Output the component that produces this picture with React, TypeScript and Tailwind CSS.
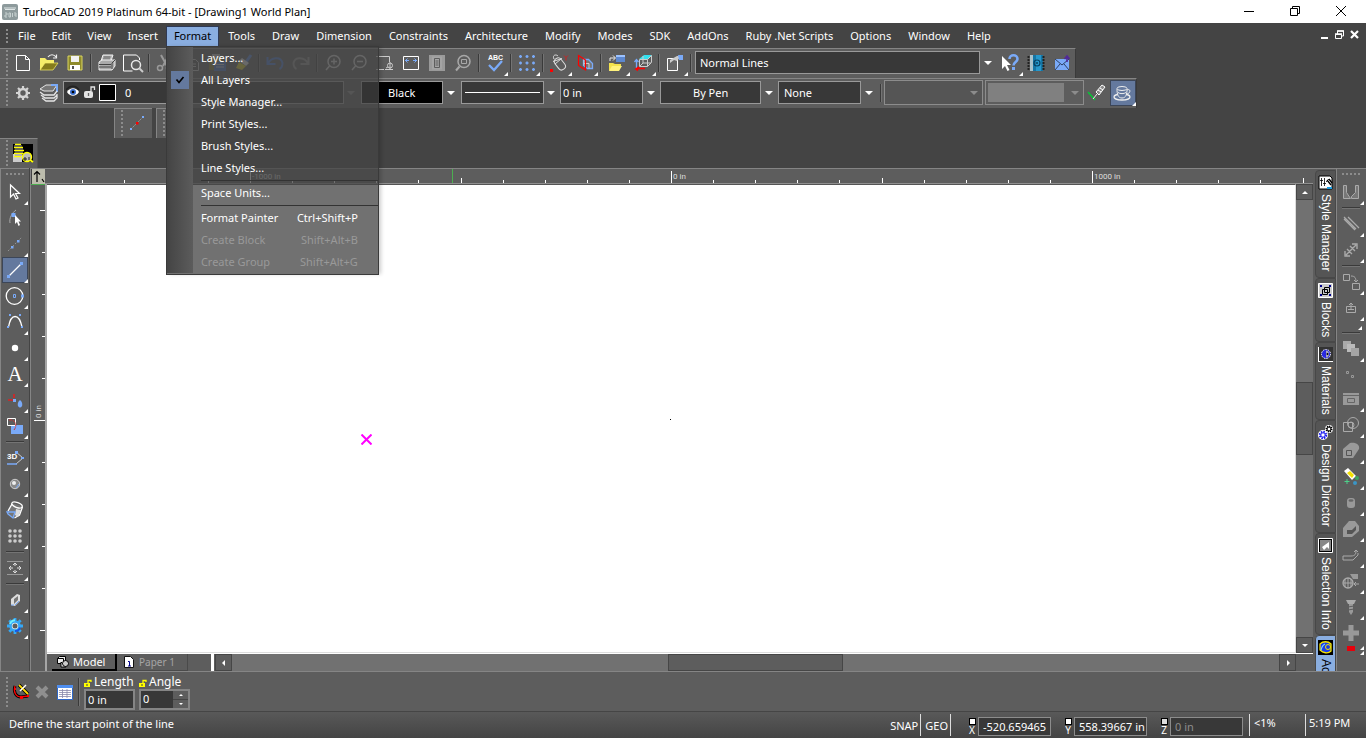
import React from "react";

type Kids = { children?: React.ReactNode };

const B = "#7aaaf8";

function Ico({ children }: Kids) {
  return (
    <svg width="26" height="26" viewBox="0 0 26 26" fill="none" aria-hidden="true" className="block shrink-0">
      {children}
    </svg>
  );
}

const svgOf = (node: React.ReactNode) => <Ico>{node}</Ico>;

/* ---------- drawings for the standard toolbar ---------- */

const icons = {
  fresh: svgOf(<path d="M6.500 5.500h9l4 4v11h-13zM15.500 5.500v4h4" stroke="#fff" />),
  open: svgOf(
    <>
      <path d="M4 20V8h5l2 2h7v3" fill="#f6ee6a" />
      <path d="M4 20l5-7h13l-5 7z" fill="#857c1c" stroke="#f6ee6a" strokeWidth=".7" />
      <path d="M12 7c2-3 6-3 8 0M20.500 4.500V8H17" stroke="#eee" strokeWidth="1.200" />
    </>,
  ),
  save: svgOf(
    <>
      <path d="M6 6h14v14H6z" fill="#8f8b2c" stroke="#d9d560" />
      <path d="M9 6h8v6H9z" fill="#f2f2f2" />
      <path d="M8 15h10v5H8z" fill="#fff" />
      <path d="M10 16h2v3h-2z" fill="#555" />
    </>,
  ),
  print: svgOf(
    <>
      <path d="M9 5h10l-2 6H7z" fill="#bbb" stroke="#eee" />
      <path d="M9.500 7h7M9 9h7" stroke="#555" />
      <path d="M5 12l3-2h13v6l-3 4H5z" fill="#aaa" stroke="#eee" />
      <path d="M5 14.500h12M5 17h12M18 19v-6l3-3" stroke="#444" />
    </>,
  ),
  preview: svgOf(
    <>
      <path d="M19.500 10V8l-3-3h-13v16h9" stroke="#fff" />
      <circle cx="16" cy="15" r="4.500" stroke="#e8e8e8" strokeWidth="1.500" />
      <path d="M19 18l4 4" stroke="#ccc" strokeWidth="2" />
    </>,
  ),
  cut: svgOf(
    <>
      <path d="M9 5l6 11M17 5l-6 11" stroke="#999" strokeWidth="2" />
      <circle cx="8" cy="18" r="2.500" stroke="#999" strokeWidth="1.500" />
      <circle cx="17" cy="18" r="2.500" stroke="#999" strokeWidth="1.500" />
    </>,
  ),
  copy: svgOf(
    <>
      <path d="M5.500 5.500h8v10h-8zM11.500 9.500h6l3 3v8h-9z" stroke="#bbb" fill="#555" />
      <path d="M13 14h5M13 16.500h5" stroke="#bbb" />
    </>,
  ),
  paste: svgOf(
    <>
      <path d="M5 6h14v14H5z" fill="#8a7d38" />
      <path d="M8 4h8v4H8z" fill="#bbb" />
      <path d="M10 12h12v9H10z" fill="#4b76c0" />
      <path d="M12 14.500h8M12 17h8" stroke="#ccc" />
    </>,
  ),
  brush: svgOf(
    <>
      <path d="M21 5l-5 7" stroke="#5a86d8" strokeWidth="3" />
      <path d="M12 8l7 5-3 3-7-5z" fill="#ddd" />
      <path d="M9 12l7 4-4 4-6-2z" fill="#d8cc2e" />
    </>,
  ),
  undo: svgOf(<path d="M5.500 7v7h8M6 13.500C9 7 19 6 20.500 13c0 3-1 5-3 6" stroke="#4e7bd0" strokeWidth="2" />),
  redo: svgOf(<path d="M20.500 7v7h-8M20 13.500C17 7 7 6 5.500 13c0 3 1 5 3 6" stroke="#8d8d8d" strokeWidth="2" />),
  zin: svgOf(
    <>
      <circle cx="14" cy="11.500" r="6" stroke="#ccc" strokeWidth="1.500" />
      <path d="M9.500 16L6 20M11 11.500h6M14 8.500v6" stroke="#ccc" strokeWidth="1.500" />
    </>,
  ),
  zout: svgOf(
    <>
      <circle cx="14" cy="11.500" r="6" stroke="#ccc" strokeWidth="1.500" />
      <path d="M9.500 16L6 20M11 11.500h6" stroke="#ccc" strokeWidth="1.500" />
    </>,
  ),
  zwin: svgOf(
    <>
      <path d="M4 6.500h13.500V12M4 19.500h8" stroke="#ccc" />
      <circle cx="18" cy="15.500" r="2.500" stroke="#ccc" />
      <path d="M18 12v8M14 18l2-1M13 19.500h8" stroke="#ccc" />
    </>,
  ),
  extents: svgOf(
    <>
      <path d="M5.500 6.500h15v13h-15z" stroke="#fff" />
      <path d="M7 10.500h4M9.500 8.500l-2 2 2 2M19 10.500h-4M16.500 8.500l2 2-2 2" stroke={B} />
    </>,
  ),
  full: svgOf(
    <>
      <path d="M5 5h16v16H5z" fill="#9a9a9a" />
      <path d="M8 6.500h10v13H8z" fill="#a4a4a4" />
      <path d="M10.500 8.500h5v9h-5zM11.500 11h3M11.500 13h3M11.500 15h3" stroke="#5d5d5d" />
    </>,
  ),
  zsel: svgOf(
    <>
      <circle cx="14" cy="11.500" r="6" stroke="#a8a8a8" strokeWidth="1.500" />
      <path d="M9.500 16.500L6 20.500" stroke="#a8a8a8" strokeWidth="2" />
      <path d="M11.500 9.500h5v4h-5z" stroke="#a8a8a8" />
    </>,
  ),
  grid: svgOf(
    <path
      d="M5 6.500h3M11.500 6.500h3M18 6.500h3M5 13h3M11.500 13h3M18 13h3M5 19.500h3M11.500 19.500h3M18 19.500h3M6.500 5v3M13 5v3M19.500 5v3M6.500 11.500v3M13 11.500v3M19.500 11.500v3M6.500 18v3M13 18v3M19.500 18v3"
      stroke={B}
      strokeWidth="1.500"
    />,
  ),
  mouse: svgOf(
    <>
      <rect x="10" y="8" width="7.500" height="13" rx="3.500" transform="rotate(-38 13 14)" stroke="#ddd" />
      <path d="M7 11.500l9-3M8 9c-2-4 2-5 4-3M9 14l6-5" stroke="#ddd" />
      <path d="M18 5.500l2 2 2-2M20 7.500v3" stroke="#c22" />
      <path d="M4 19h3v3H4z" fill="#f00" />
    </>,
  ),
  solid: svgOf(
    <>
      <path d="M11.500 9.500h5l4 4v5h-5l-4-3z" fill="#777" stroke={B} strokeWidth="1.300" />
      <path d="M12 13.500h5v5M12 9.500v6" stroke="#ccc" />
      <path d="M6.500 5.500l7 4.500v10l-7-4.500z" stroke="#f00" strokeWidth="1.200" />
    </>,
  ),
  folderLink: svgOf(
    <>
      <path d="M12 5h9v7h-9z" fill="#5d88cf" />
      <path d="M12 5h9v2h-9z" fill="#9cc2ff" />
      <path d="M6 11V8h5M9 5.500L11.500 8 9 10.500" stroke="#eee" />
      <path d="M5 21V13h4l2 1h6v2" fill="#f3e24d" />
      <path d="M5 21l3-5h10l-3 5z" fill="#fff27d" />
    </>,
  ),
  cube: svgOf(
    <>
      <path d="M9 9l5-4h8l-4 4z" fill="#33e0ee" />
      <path d="M9.500 9.500h8v7h-8zM17.500 9.500l4-4v7l-4 4M13 6v7h8M10 16l3-3" stroke="#ccc" />
      <path d="M6.500 18v-8M4.500 12l2-2.500 2 2.500" stroke={B} strokeWidth="1.300" />
      <path d="M6 18.500h9M9 17l-3 2 2 1.500" stroke="#f00" strokeWidth="1.600" />
    </>,
  ),
  wrench: svgOf(
    <>
      <path d="M5.500 8.500h10v12h-10z" fill="#666" stroke="#fff" />
      <path d="M8 10l7-4h4l-4 5-3-1-4 3z" fill="#ccc" />
      <path d="M16 5h5v5h-4" fill={B} />
    </>,
  ),
  help: svgOf(
    <>
      <path d="M5 6v13l3-3 2.500 5 2-1-2.500-5h4z" fill="#fff" />
      <path d="M12.500 9c0-5 8-5 8 0 0 3-4 3-4 6.500" stroke={B} strokeWidth="2.600" />
      <path d="M15 17h3v3h-3z" fill={B} />
    </>,
  ),
  book: svgOf(
    <>
      <path d="M7 5h13v16H7z" fill="#1576a6" />
      <path d="M13 5h5v16h-5z" fill="#2798cc" />
      <path d="M7 5h3v16H7z" fill="#a9c2cc" />
      <path d="M5.500 6v15M20.500 6v15" stroke="#222" strokeWidth="2" strokeDasharray="2 1" />
      <circle cx="14" cy="13" r="3" stroke="#074061" strokeWidth="1.200" />
      <circle cx="14" cy="13" r="1" fill="#074061" />
    </>,
  ),
  mail: svgOf(
    <>
      <path d="M6 9h14v11H6z" fill={B} />
      <path d="M6 9l7 6 7-6M6 20l5-6M20 20l-5-6" stroke="#2c3f63" />
      <path d="M18 12V7M15.500 9L18 6 20.500 9" stroke="#51289a" strokeWidth="1.600" />
    </>,
  ),
  gear: svgOf(
    <>
      <circle cx="13" cy="13" r="4" stroke="#d4d4d4" strokeWidth="2.600" />
      <path d="M13 6v3M13 17v3M6 13h3M17 13h3M8 8l2 2M16 16l2 2M8 18l2-2M16 10l2-2" stroke="#d4d4d4" strokeWidth="2.200" />
    </>,
  ),
  layers: svgOf(
    <>
      <path d="M4 9l6-4h11l-4 6H8z" fill="#777" stroke="#e5e5e5" />
      <path d="M15 5h6v7" stroke={B} strokeWidth="2" />
      <path d="M4 12l4 3h10l3-4M5 15l4 3h9l3-3M6 18l4 3h8l3-3v-4" stroke="#e5e5e5" strokeWidth="1.300" />
    </>,
  ),
  pencil: svgOf(
    <>
      <path d="M4 12l7 8" stroke="#0c3" strokeWidth="1.300" />
      <path d="M9 19l4-5" stroke="#eee" />
      <path d="M12 12l6-7 3 2-6 8z" fill="#888" stroke="#fff" />
      <path d="M14 10l3 2M16 8l3 2" stroke="#fff" />
    </>,
  ),
  cup: svgOf(
    <>
      <ellipse cx="12" cy="17" rx="8" ry="3" stroke="#eee" strokeWidth="1.300" />
      <path d="M7 9c0 5 1 9 5 9s5-4 5-9" fill="#64799e" stroke="#eee" />
      <ellipse cx="12" cy="8.500" rx="5" ry="2" fill="#64799e" stroke="#eee" />
      <path d="M17 10c4-2 4 4-1 4M8 12.500c2 1.500 6 1.500 8 0" stroke="#eee" />
    </>,
  ),
  /* ---------- drawing palette ---------- */
  select: svgOf(<path d="M8.500 6v12l3-3 2.500 5 2-1-2.500-4.500h4z" stroke="#fff" strokeWidth="1.200" />),
  node: svgOf(
    <>
      <path d="M8 18c-1-5 2-10 6-13" stroke="#aaa" />
      <path d="M9.500 8h4v4h-4z" fill={B} />
      <path d="M13 10v9l2-2 1.500 4 1.500-1-1.500-3.500H19z" fill="#fff" />
    </>,
  ),
  dashed: svgOf(
    <>
      <path d="M6 20L20 6" stroke="#aaa" strokeDasharray="1 1.500" />
      <path d="M9 15h2.500v2.500H9zM15 9h2.500v2.500H15z" fill={B} />
    </>,
  ),
  line: svgOf(
    <>
      <path d="M6.500 19.500L19.500 6.500" stroke="#fff" strokeWidth="1.200" />
      <path d="M5 18h3v3H5zM18 5h3v3h-3z" fill={B} />
    </>,
  ),
  circle: svgOf(
    <>
      <circle cx="12.500" cy="13" r="8.300" stroke="#fff" strokeWidth="1.300" />
      <path d="M11.500 11.500h2v3h-2z" stroke={B} />
      <path d="M19 11.500h3v3h-3z" fill={B} />
    </>,
  ),
  curve: svgOf(
    <>
      <path d="M6.500 18C9 4 17 4 20 18" stroke="#fff" strokeWidth="1.300" />
      <path d="M7 5h2v2H7zM17 5h2v2h-2zM5 17h2v2H5zM19 17h2v2h-2z" fill={B} />
    </>,
  ),
  point: svgOf(<circle cx="13" cy="13" r="3.200" fill="#fff" />),
  colors: svgOf(
    <>
      <path d="M12 7v4M6 13h5" stroke="#d22" strokeWidth="1.600" />
      <path d="M11 12h3v3h-3z" fill={B} />
      <path d="M18 13c3 2 3 7.500 0 7.500s-3-5.500 0-7.500z" fill={B} />
    </>,
  ),
  transform: svgOf(
    <>
      <path d="M9 12h12v9H9z" fill={B} />
      <path d="M5.500 5.500h8v7h-8z" fill="#5d5d5d" stroke="#fff" />
      <path d="M7 7c6-1 9 5 5 10" stroke="#c33" strokeDasharray="3 1" />
    </>,
  ),
  threeD: svgOf(
    <>
      <path d="M14 7l7 6-7 6" stroke="#ccc" />
      <path d="M13 6h3v3h-3zM19 12h3v2h-3z" fill={B} />
      <path d="M5 19h10" stroke={B} strokeWidth="1.500" />
    </>,
  ),
  ball: svgOf(
    <>
      <circle cx="13" cy="13" r="4.700" fill="#8a8a8a" stroke="#ccc" />
      <circle cx="12" cy="12" r="2" fill="#eee" />
      <path d="M17 13l-3 4" stroke={B} />
    </>,
  ),
  cylinder: svgOf(
    <>
      <path d="M10 6l10 3-3 9-6 3-6-5z" fill="#777" />
      <ellipse cx="15" cy="8" rx="5.500" ry="2.500" transform="rotate(20 15 8)" stroke="#fff" strokeWidth="1.300" />
      <path d="M10 7l-4 7M20.500 10l-3 8-5 3" stroke="#fff" strokeWidth="1.300" />
      <path d="M14 12l5 1-3 7-3-2z" fill="#ddd" />
      <path d="M5 15h8l-2 6-5-4z" stroke={B} strokeWidth="1.300" />
    </>,
  ),
  dots: svgOf(
    <g fill="#ccc">
      {[8, 13, 18].map((y) => [8, 13, 18].map((x) => <circle key={`${x}-${y}`} cx={x} cy={y} r="1.800" />))}
    </g>,
  ),
  move: svgOf(
    <>
      <path d="M5 6.500h16M5 19.500h16" stroke="#999" />
      <path d="M13 8v3M13 15v3M7 13h4M15 13h4M11 10l2-2 2 2M11 16l2 2 2-2M9 11l-2 2 2 2M17 11l2 2-2 2" stroke="#ddd" />
    </>,
  ),
  slab: svgOf(
    <>
      <path d="M9 12l6-5 3 1v6l-5 5-4-1z" fill="#ddd" />
      <path d="M12 12l4-3v4l-4 4z" fill="#777" />
      <path d="M13 18l4-4M9 18h3" stroke={B} />
    </>,
  ),
  cog: svgOf(
    <>
      <path
        d="M13 5v4M13 17v4M5 13h4M17 13h4M7.300 7.300l2.500 2.500M16.200 16.200l2.500 2.500M7.300 18.700l2.500-2.500M16.200 9.800l2.500-2.500"
        stroke="#36a8f5"
        strokeWidth="2.800"
      />
      <circle cx="13" cy="13" r="4.500" fill="#e8f0f4" stroke="#36a8f5" strokeWidth="2.600" />
      <circle cx="13" cy="13" r="2.500" fill="#5d5d5d" />
      <path d="M8 11a5.500 5.500 0 015-3.800" stroke="#6ff0ff" strokeWidth="2" />
      <path d="M18 14.500a5 5 0 01-5 3.500" stroke="#1557e8" strokeWidth="2" />
    </>,
  ),
  /* ---------- modify palette ---------- */
  magnet: svgOf(<path d="M5.500 6.500h3v7l4 6h-7zM20.500 6.500h-3v7l-4 4v2h7z" stroke="#aaa" fill="#777" />),
  parallel: svgOf(<path d="M10 6l11 11M6 8l11 11M6 6l12 12" stroke="#aaa" strokeWidth="1.300" />),
  stretch: svgOf(<path d="M8 18L18 8M14 7h5v5M7 14v5h5M9 12l5 5M12 9l5 5" stroke="#aaa" strokeWidth="1.400" />),
  chain: svgOf(<path d="M5.500 5.500h6v6h-6zM14.500 14.500h7v6h-7zM13 7c4 0 5 2 5 6M16 11l2 2 2-2" stroke="#aaa" />),
  house: svgOf(<path d="M8.500 11.500h9v6h-9zM10 14.500h6M13 15V8M11 10l2-2 2 2" stroke="#aaa" />),
  stack: svgOf(
    <>
      <path d="M5 5h8v8H5z" fill="#aaa" />
      <path d="M9 8h8v8H9z" fill="#bbb" />
      <path d="M13 12h8v8h-8z" fill="#a5a5a5" />
    </>,
  ),
  bits: svgOf(<path d="M8.500 9.500h2v2h-2zM13.500 13.500h2v2h-2z" stroke="#999" />),
  panel: svgOf(
    <>
      <path d="M5 7h16v12H5z" fill="#999" />
      <path d="M5 9.500h16M9.500 12.500h7v4h-7z" stroke="#666" />
    </>,
  ),
  union: svgOf(
    <>
      <circle cx="15" cy="11" r="5.500" stroke="#aaa" />
      <path d="M5.500 10.500h9v9h-9z" stroke="#aaa" />
      <circle cx="13" cy="13" r="3" stroke="#aaa" />
    </>,
  ),
  boolean: svgOf(
    <>
      <path d="M5 11l7-6c6-1 10 2 9 6l-6 9H5z" fill="#999" />
      <path d="M8.500 12.500h5v5h-5z" stroke="#555" />
    </>,
  ),
  paint: svgOf(
    <>
      <path d="M6 7l4-3 8 8-4 4z" fill="#fff" />
      <path d="M9 9l3-2 4 4-2 3z" fill="#f3e000" />
      <path d="M9 15v5M6.500 17.500h5" stroke="#4cd28a" />
      <circle cx="19" cy="14" r="2" fill="#3ba55f" />
      <circle cx="17" cy="19" r="2" fill="#3b95c5" />
    </>,
  ),
  drum: svgOf(
    <>
      <rect x="9" y="8" width="8" height="10" rx="3" fill="#999" />
      <ellipse cx="13" cy="10.500" rx="2.500" ry="1.300" fill="#666" />
    </>,
  ),
  shell: svgOf(
    <>
      <path d="M5 12l6-7h6l4 5v5l-7 6H5z" fill="#999" />
      <path d="M9 14h5l4-4v4l-4 4H9z" fill="#555" />
    </>,
  ),
  bend: svgOf(<path d="M5 18h10l5-5v-2M5 14h8c4 0 5-2 5-5M16 10l2-2 2 2M5 14v4" stroke="#aaa" />),
  globe: svgOf(
    <>
      <circle cx="10" cy="15" r="5" stroke="#aaa" strokeWidth="1.300" />
      <path d="M5 15h10M10 10v10M7 11v8M13 11v8M17 16h4M18 14l-2 2 2 2" stroke="#aaa" />
      <path d="M12 6h8v5h-5z" fill="#999" />
    </>,
  ),
  screw: svgOf(
    <>
      <path d="M8 6h10l-2 4h-6z" fill="#aaa" />
      <path d="M11 10h4v8l-2 3-2-3z" fill="#999" />
      <path d="M10 13l6-1M10 16l6-1" stroke="#5d5d5d" />
    </>,
  ),
  plus: svgOf(<path d="M10.500 5h5v5.500H21v5h-5.500V21h-5v-5.500H5v-5h5.500z" fill="#999" />),
};

const abcIcon = (
  <span className="relative block size-[26px]">
    <Ico>
      <path d="M7 15l5 5 8-9" stroke={B} strokeWidth="2.300" />
    </Ico>
    <span className="absolute top-1 left-[6px] font-['Liberation_Sans',sans-serif] text-[7px] leading-[8px] font-bold text-white">ABC</span>
  </span>
);
const letterIcon = (
  <span className="block w-[26px] text-center font-['Liberation_Serif',serif] text-[21px] leading-[26px] text-white">A</span>
);
const threeDIcon = (
  <span className="relative block size-[26px]">
    {icons.threeD}
    <span className="absolute top-2 left-[5px] font-['Liberation_Sans',sans-serif] text-[8px] leading-[8px] font-bold text-white">3D</span>
  </span>
);

/* ---------- small building blocks ---------- */

function Tool({ icon, name, fly, on }: { icon: React.ReactNode; name: string; fly?: boolean; on?: boolean }) {
  return (
    <button
      type="button"
      aria-label={name}
      className={`relative block size-[26px] shrink-0 ${on ? "bg-[#64799e] outline-1 -outline-offset-1 outline-[#3c4658]" : ""}`}
    >
      {icon}
      {fly && (
        <svg width="4" height="4" viewBox="0 0 4 4" className="absolute right-0 bottom-0" aria-hidden="true">
          <path d="M4 0v4H0z" fill="#fff" />
        </svg>
      )}
    </button>
  );
}

function VSep() {
  return <span className="mx-[2px] h-[18px] w-[2px] shrink-0 border-l border-r border-l-[#3a3a3a] border-r-[#747474]" />;
}
function HSep() {
  return <span className="my-[2px] h-[2px] w-[18px] shrink-0 border-t border-b border-t-[#3a3a3a] border-b-[#747474]" />;
}
function VGrip() {
  return (
    <span className="flex w-[10px] shrink-0 justify-center pl-1">
      <span className="h-[26px] w-[2px] bg-[repeating-linear-gradient(to_bottom,#8c8c8c_0_2px,transparent_2px_4px)]" />
    </span>
  );
}
function HGrip() {
  return <span className="my-1 h-[2px] w-[18px] shrink-0 bg-[repeating-linear-gradient(to_right,#8c8c8c_0_2px,transparent_2px_4px)]" />;
}
function Caret({ dim }: { dim?: boolean }) {
  return (
    <svg width="8" height="4" viewBox="0 0 8 4" className="block shrink-0" aria-hidden="true">
      <path d="M0 0h8L4 4z" fill={dim ? "#8c8c8c" : "#fff"} />
    </svg>
  );
}

function Combo({ name, value, className }: { name: string; value: string; className: string }) {
  return (
    <label className="flex shrink-0 items-center">
      <select
        aria-label={name}
        defaultValue={value}
        className={`appearance-none rounded-none border border-[#999] text-white outline-none ${className}`}
      >
        <option>{value}</option>
      </select>
      <span className="flex w-[17px] pl-1">
        <Caret />
      </span>
    </label>
  );
}

/* ---------- menu bar ---------- */

const menusLeft = ["File", "Edit", "View", "Insert"];
const menusRight = [
  "Tools", "Draw", "Dimension", "Constraints", "Architecture", "Modify", "Modes", "SDK", "AddOns",
  "Ruby .Net Scripts", "Options", "Window", "Help",
];

type Entry = { label: string; keys?: string; off?: boolean; checked?: boolean } | null;
const formatMenu: Entry[] = [
  { label: "Layers..." },
  { label: "All Layers", checked: true },
  { label: "Style Manager..." },
  { label: "Print Styles..." },
  { label: "Brush Styles..." },
  { label: "Line Styles..." },
  null,
  { label: "Space Units..." },
  null,
  { label: "Format Painter", keys: "Ctrl+Shift+P" },
  { label: "Create Block", keys: "Shift+Alt+B", off: true },
  { label: "Create Group", keys: "Shift+Alt+G", off: true },
];

function MenuName({ name }: { name: string }) {
  return (
    <button type="button" className="h-5 px-2 text-white">
      {name}
    </button>
  );
}

function FormatMenu() {
  return (
    <div
      role="menu"
      className="absolute top-full left-0 z-20 w-[213px] border border-[#3a3a3a] bg-[#444]/76 pb-px shadow-[3px_0_4px_-1px_rgba(0,0,0,0.2)]"
    >
      {formatMenu.map((e, i) =>
        e === null ? (
          <div key={i} className="flex h-[3px]">
            <span className="w-[26px] bg-linear-to-r from-[#444] to-[#5c5c5c]" />
            <span className="mt-px ml-2 h-px flex-1 bg-[#333]" />
          </div>
        ) : (
          <button
            key={i}
            type="button"
            role="menuitem"
            disabled={e.off}
            className={`flex h-[22px] w-full items-stretch text-left ${e.off ? "text-[#999]" : "text-white"}`}
          >
            <span className="flex w-[26px] items-center justify-center bg-linear-to-r from-[#444] to-[#5c5c5c]">
              {e.checked && (
                <span className="flex size-[18px] items-center justify-center bg-[#64799e]">
                  <svg width="10" height="8" viewBox="0 0 10 8" aria-hidden="true">
                    <path d="M1.500 3.500l2.500 3 4.500-5.500" stroke="#000" strokeWidth="1.700" fill="none" />
                  </svg>
                </span>
              )}
            </span>
            <span className="flex-1 pl-2 leading-[22px]">{e.label}</span>
            <span className="pr-5 leading-[22px]">{e.keys}</span>
          </button>
        ),
      )}
    </div>
  );
}

/* ---------- rulers ---------- */

function TopRuler() {
  const ticks: React.ReactNode[] = [];
  for (let k = -14; k <= 15; k++) {
    const x = Math.round(626 + k * 42.1);
    const h = k % 10 === 0 ? 12 : k % 5 === 0 ? 5 : 3;
    ticks.push(<path key={k} d={`M${x + 0.5} ${14 - h}v${h}`} stroke="#fff" />);
  }
  return (
    <svg className="block h-[15px] min-w-0 flex-1 bg-[#5d5d5d] font-['Roboto',sans-serif] text-[8px]" aria-hidden="true">
      {ticks}
      <path d="M407.500 0v14" stroke="#4caf50" />
      <text x="207" y="10" fill="#ddd">-1000 in</text>
      <text x="628" y="10" fill="#ddd">0 in</text>
      <text x="1049" y="10" fill="#ddd">1000 in</text>
      <path d="M0 14.500h1400" stroke="#8f8f8f" />
    </svg>
  );
}

function SideRuler() {
  const ticks: React.ReactNode[] = [];
  for (let k = -5; k <= 5; k++) {
    const y = 236 + k * 42;
    const w = k === 0 ? 11 : k % 5 === 0 ? 5 : 3;
    ticks.push(<path key={k} d={`M${14 - w} ${y + 0.5}h${w}`} stroke="#fff" />);
  }
  return (
    <svg className="block h-full w-4 shrink-0 bg-[#5d5d5d] font-['Roboto',sans-serif] text-[8px]" aria-hidden="true">
      {ticks}
      <path d="M0 .5h15" stroke="#4caf50" />
      <text transform="translate(10 234) rotate(-90)" fill="#ddd">0 in</text>
      <path d="M15 0v700" stroke="#a5a5a5" strokeWidth="2" />
    </svg>
  );
}

/* ---------- docked tabs ---------- */

const tabGlyph = {
  style: (
    <>
      <path d="M1 1h11l2 2v11H1z" fill="#fff" stroke="#000" />
      <path d="M3.500 3v8M2 5.500h3M6.500 3v8M5 8.500h3" stroke="#000" strokeWidth=".8" />
      <path d="M9 5l4 5M11 4l3 4" stroke="#000" strokeWidth="1.300" />
      <path d="M8 7l3-3" stroke="#000" strokeWidth=".8" />
      <path d="M9 13h5" stroke="#1a9be0" strokeWidth="2" />
    </>
  ),
  blocks: (
    <>
      <path d="M.5.5h14v14H.5z" fill="#ccc" stroke="#fff" />
      <path d="M4.500 6.500h5v5h-5zM6.500 4.500h5v5h-5z" stroke="#000" />
      <path d="M2 2h2v2H2zM11 2h2v2h-2zM2 11h2v2H2zM11 11h2v2h-2z" fill="#00008b" />
    </>
  ),
  materials: (
    <>
      <path d="M0 0h15v15H0z" fill="#333" />
      <path d="M.5 0v15M0 14.500h15" stroke="#fff" />
      <circle cx="8" cy="7" r="4.500" fill="#2a2ae0" stroke="#fff" strokeDasharray="1.500 1" />
      <path d="M8 3.500c4 0 4 7 0 7z" fill="#aab" />
      <circle cx="9.500" cy="7" r="1" fill="#000" />
    </>
  ),
  gears: (
    <>
      <circle cx="11" cy="4" r="3" fill="#fff" stroke="#fff" strokeWidth="2" />
      <circle cx="11" cy="4" r="2.600" stroke="#000" strokeWidth="1.800" strokeDasharray="1.200 .8" />
      <circle cx="11" cy="4" r="2" stroke="#000" />
      <circle cx="5" cy="10" r="4" fill="#fff" stroke="#fff" strokeWidth="2" />
      <circle cx="5" cy="10" r="3.200" stroke="#1a1af0" strokeWidth="2" strokeDasharray="1.500 1" />
      <circle cx="5" cy="10" r="2.200" stroke="#1a1af0" />
    </>
  ),
  info: (
    <>
      <path d="M.5.5h14v14H.5z" fill="#000" stroke="#fff" />
      <path d="M2 2h11v11H2z" fill="#888" />
      <path d="M4 9l7-5v7l-2-2-3 3z" fill="#fff" />
    </>
  ),
  action: (
    <>
      <path d="M0 0h15v15H0z" fill="#000" />
      <path d="M2 4c3-3 8-3 11 0v7c-3 3-8 2-11-1z" fill="#1a3be8" stroke="#f4e400" strokeWidth="1.300" />
      <circle cx="10" cy="7" r="2.500" stroke="#f4e400" />
      <path d="M3 10c1-4 2-5 4-6" stroke="#7fd4ff" strokeWidth="1.200" />
    </>
  ),
};

const sideTabs: { name: string; glyph: React.ReactNode; h: string; on?: boolean }[] = [
  { name: "Style Manager", glyph: tabGlyph.style, h: "h-[108px]" },
  { name: "Blocks", glyph: tabGlyph.blocks, h: "h-16" },
  { name: "Materials", glyph: tabGlyph.materials, h: "h-[78px]" },
  { name: "Design Director", glyph: tabGlyph.gears, h: "h-[113px]" },
  { name: "Selection Info", glyph: tabGlyph.info, h: "h-[102px]" },
  { name: "Ac", glyph: tabGlyph.action, h: "h-[60px]", on: true },
];

function ScrollButton({ name, d, className }: { name: string; d: string; className: string }) {
  return (
    <button type="button" aria-label={name} className={`flex shrink-0 items-center justify-center border border-[#464646] bg-[#5d5d5d] ${className}`}>
      <svg width="6" height="6" viewBox="0 0 6 6" aria-hidden="true">
        <path d={d} fill="#fff" />
      </svg>
    </button>
  );
}

function Lock() {
  return (
    <svg width="8" height="8" viewBox="0 0 8 8" fill="none" aria-hidden="true" className="mt-1 shrink-0">
      <path d="M0 4h6v4H0z" fill="#ff0" />
      <path d="M4 4V1.500h3V3" stroke="#ff0" strokeWidth="1.300" />
      <path d="M2.500 5h1v2h-1z" fill="#444" />
    </svg>
  );
}

function Coord({ axis, value, off }: { axis: string; value: string; off?: boolean }) {
  return (
    <label className="flex items-center gap-[2px]">
      <span className="flex w-2 flex-col items-center">
        <span className={`size-[7px] border border-black ${off ? "bg-[#ddd]" : "bg-white"}`} />
        <span className="text-[10px] leading-[10px] text-white">{axis}</span>
      </span>
      <input
        defaultValue={value}
        disabled={off}
        className={`h-[19px] w-[73px] border border-[#8c8c8c] bg-[#383838] pl-1 ${off ? "text-[#8c8c8c]" : "text-white"}`}
      />
    </label>
  );
}

export default function App() {
  return (
    <div className="flex h-screen flex-col overflow-hidden bg-[#444] font-['Noto_Sans',sans-serif] text-[11px] leading-4 text-white">
      {/* title bar */}
      <header className="flex h-[23px] shrink-0 items-center bg-white text-black">
        <svg width="16" height="16" viewBox="0 0 16 16" className="mx-[2px]" aria-hidden="true">
          <rect width="16" height="16" rx="2" fill="#8d9a9c" />
          <path d="M2 4h12M3 5.500h10" stroke="#dfe6e6" />
          <path d="M3 9h2v2H3v2h2M7 9h1.500v4H7zM10.500 9v4M12 9h2v4M12 11h2" stroke="#c6d0d0" fill="none" />
        </svg>
        <h1 className="ml-[3px]">TurboCAD 2019 Platinum 64-bit - [Drawing1 World Plan]</h1>
        <div className="mr-[2px] mb-[2px] ml-auto flex">
          <button type="button" aria-label="Minimize" className="flex w-[46px] justify-center">
            <svg width="10" height="10" viewBox="0 0 10 10"><path d="M0 5.500h10" stroke="#000" /></svg>
          </button>
          <button type="button" aria-label="Restore" className="flex w-[46px] justify-center">
            <svg width="10" height="10" viewBox="0 0 10 10" fill="none"><path d="M.5 2.500h7v7h-7zM2.500 2.500v-2h7v7h-2" stroke="#000" /></svg>
          </button>
          <button type="button" aria-label="Close" className="flex w-[46px] justify-center">
            <svg width="10" height="10" viewBox="0 0 10 10"><path d="M0 0l10 10M10 0L0 10" stroke="#000" /></svg>
          </button>
        </div>
      </header>

      {/* menu bar */}
      <nav className="flex h-[25px] shrink-0 items-center">
        <span className="flex w-[10px] justify-center pl-1">
          <span className="h-[14px] w-[2px] bg-[repeating-linear-gradient(to_bottom,#8c8c8c_0_2px,transparent_2px_4px)]" />
        </span>
        {menusLeft.map((m) => <MenuName key={m} name={m} />)}
        <div className="relative">
          <button type="button" aria-expanded="true" className="h-5 border border-b-0 border-[#2f3a55] bg-[#8aaee0] px-[7px] text-black">
            Format
          </button>
          <FormatMenu />
        </div>
        <div className="flex gap-px pl-px">
          {menusRight.map((m) => <MenuName key={m} name={m} />)}
        </div>
        <div className="mr-[7px] mb-[2px] ml-auto flex gap-[6px]">
          <button type="button" aria-label="Minimize drawing">
            <svg width="9" height="9" viewBox="0 0 9 9"><path d="M1 8h7" stroke="#fff" strokeWidth="2" /></svg>
          </button>
          <button type="button" aria-label="Restore drawing">
            <svg width="9" height="9" viewBox="0 0 9 9" fill="none"><path d="M.5 4.500h6v4h-6zM2.500 4V1h6v5h-2" stroke="#fff" /><path d="M2 1h7M0 4h7" stroke="#fff" strokeWidth="1.500" /></svg>
          </button>
          <button type="button" aria-label="Close drawing">
            <svg width="9" height="9" viewBox="0 0 9 9"><path d="M1 1l7 7M8 1L1 8" stroke="#fff" strokeWidth="2.200" /></svg>
          </button>
        </div>
      </nav>

      {/* standard toolbar */}
      <div className="flex h-[30px] shrink-0">
        <div className="flex items-center border-t border-r border-t-[#858585] border-r-[#3a3a3a] bg-[#5d5d5d] pb-[2px]">
          <VGrip />
          <Tool icon={icons.fresh} name="New" />
          <Tool icon={icons.open} name="Open" />
          <Tool icon={icons.save} name="Save" />
          <VSep />
          <Tool icon={icons.print} name="Print" />
          <Tool icon={icons.preview} name="Print preview" />
          <VSep />
          <Tool icon={icons.cut} name="Cut" />
          <Tool icon={icons.copy} name="Copy" />
          <Tool icon={icons.paste} name="Paste" />
          <Tool icon={icons.brush} name="Format painter" />
          <VSep />
          <Tool icon={icons.undo} name="Undo" />
          <Tool icon={icons.redo} name="Redo" />
          <VSep />
          <Tool icon={icons.zin} name="Zoom in" />
          <Tool icon={icons.zout} name="Zoom out" />
          <Tool icon={icons.zwin} name="Zoom window" />
          <Tool icon={icons.extents} name="Zoom extents" />
          <Tool icon={icons.full} name="Zoom page" />
          <Tool icon={icons.zsel} name="Zoom selection" />
          <VSep />
          <Tool icon={abcIcon} name="Spelling" fly />
          <VSep />
          <Tool icon={icons.grid} name="Grid" fly />
          <VSep />
          <Tool icon={icons.mouse} name="Snap modes" fly />
          <Tool icon={icons.solid} name="Workplane" fly />
          <VSep />
          <Tool icon={icons.folderLink} name="Import" fly />
          <Tool icon={icons.cube} name="View cube" fly />
          <VSep />
          <Tool icon={icons.wrench} name="Properties" fly />
          <VSep />
          <Combo name="Line mode" value="Normal Lines" className="ml-px h-[23px] w-[285px] bg-[#383838] px-1" />
          <Tool icon={icons.help} name="Context help" fly />
          <Tool icon={icons.book} name="Address book" />
          <Tool icon={icons.mail} name="Send mail" />
        </div>
      </div>

      {/* property toolbar */}
      <div className="flex h-[30px] shrink-0">
        <div className="flex items-center border-t border-r border-t-[#858585] border-r-[#3a3a3a] bg-[#5d5d5d] pb-[2px]">
          <VGrip />
          <Tool icon={icons.gear} name="Settings" />
          <Tool icon={icons.layers} name="Layers" />
          <div className="ml-px flex h-[23px] w-[281px] items-center border border-[#999] bg-[#383838]">
            <svg width="52" height="19" viewBox="0 0 52 19" fill="none" aria-hidden="true" className="ml-[2px]">
              <path d="M1 9c3-5 9-5 12 0-3 5-9 5-12 0z" fill="#fff" />
              <path d="M0 7c4-5 10-5 13 0" stroke="#222" strokeWidth="1.500" />
              <circle cx="7" cy="9" r="3" fill="#3a6fd0" />
              <circle cx="7" cy="9" r="1.300" fill="#000" />
              <rect x="18" y="8" width="9" height="7" rx="2" fill="#e4e4e4" />
              <path d="M25 8V4h3.500v3" stroke="#e4e4e4" strokeWidth="1.300" />
              <path d="M22.500 10v3" stroke="#666" strokeWidth="1.300" />
              <path d="M33.500 1.500h16v16h-16z" fill="#000" stroke="#fff" />
            </svg>
            <span className="ml-[7px]">0</span>
          </div>
          <span className="flex w-[15px] pl-[3px]"><Caret dim /></span>
          <Combo name="Pen color" value="Black" className="ml-[2px] h-[23px] w-[82px] bg-black pl-[26px]" />
          <label className="flex items-center">
            <span className="relative ml-px flex h-[23px] w-[83px] items-center border border-[#999] bg-[#383838] px-[3px]">
              <span className="h-px w-full bg-white" />
              <select aria-label="Line pattern" className="absolute inset-0 h-full w-full cursor-pointer appearance-none opacity-0" />
            </span>
            <span className="flex w-4 pl-[3px]"><Caret /></span>
          </label>
          <Combo name="Pen width" value="0 in" className="h-[23px] w-[83px] bg-[#383838] px-[2px]" />
          <Combo name="Print style" value="By Pen" className="h-[23px] w-[101px] bg-[#383838] pl-[32px]" />
          <Combo name="Brush" value="None" className="h-[23px] w-[83px] bg-[#383838] px-[5px]" />
          <VSep />
          <span className="relative flex h-[25px] w-[99px] items-center justify-end border border-[#8c8c8c] bg-[#555] pr-1">
            <Caret dim />
            <select disabled aria-label="Brush style" className="absolute inset-0 appearance-none opacity-0" />
          </span>
          <span className="relative ml-[2px] flex h-[25px] w-[99px] items-center justify-between border border-[#8c8c8c] bg-[#5d5d5d] pr-1 pl-[2px]">
            <span className="h-[19px] w-[76px] bg-[#808080]" />
            <Caret dim />
            <select disabled aria-label="Brush color" className="absolute inset-0 appearance-none opacity-0" />
          </span>
          <Tool icon={icons.pencil} name="Pick style" />
          <Tool icon={icons.cup} name="Render" fly on />
        </div>
      </div>

      <div className="flex h-[30px] shrink-0 gap-1 pl-[114px]">
        <div className="flex w-[38px] items-center border-t border-l border-[#858585] bg-[#5d5d5d] pb-[2px]">
          <VGrip />
          <Tool
            icon={svgOf(
              <>
                <path d="M6 19L19 6" stroke="#999" strokeDasharray="2 1" />
                <path d="M5 18h2v2H5zM17 6h2v2h-2z" fill={B} />
                <path d="M11 12h2.500v2.500H11z" fill="#f00" />
              </>,
            )}
            name="Midpoint"
          />
        </div>
        <div className="flex w-8 items-center border-t border-l border-[#858585] bg-[#5d5d5d] pb-[2px]">
          <VGrip />
        </div>
      </div>
      <div className="flex h-[30px] shrink-0">
        <div className="flex w-[38px] items-center border-t border-r border-t-[#858585] border-r-[#505050] bg-[#5d5d5d] pb-[2px]">
          <VGrip />
          <Tool
            icon={svgOf(
              <>
                <path d="M3 4h20v18H3z" fill="#000" />
                <path d="M3 14h9v8H3z" fill="#ccc" />
                <path d="M5 4.500h6M4 7.500h9M4 10.500h10M4 13.500h9M4 16.500h7" stroke="#ff0" strokeWidth="1.300" />
                <path d="M4 6h8M5 9h8M5 12h8M5 15h7" stroke="#999" />
                <circle cx="17" cy="17" r="4.500" fill="#bbb" stroke="#ff0" strokeWidth="1.400" />
                <path d="M14 18h2v2h-2zM19 17v3" stroke="#222" />
                <path d="M20 20l3 2" stroke="#ff0" strokeWidth="2" />
              </>,
            )}
            name="Database"
          />
        </div>
      </div>

      {/* work area */}
      <div className="flex min-h-0 flex-1">
        <aside className="flex w-[29px] shrink-0 flex-col items-center overflow-hidden border-t border-l border-[#858585] bg-[#5d5d5d]">
          <HGrip />
          <Tool icon={icons.select} name="Select" fly />
          <Tool icon={icons.node} name="Edit node" />
          <Tool icon={icons.dashed} name="Construction" fly />
          <Tool icon={icons.line} name="Line" fly on />
          <Tool icon={icons.circle} name="Circle" fly />
          <Tool icon={icons.curve} name="Curve" fly />
          <Tool icon={icons.point} name="Point" fly />
          <Tool icon={letterIcon} name="Text" fly />
          <Tool icon={icons.colors} name="Insert entity" fly />
          <Tool icon={icons.transform} name="Transform" fly />
          <HSep />
          <Tool icon={threeDIcon} name="3D polyline" fly />
          <Tool icon={icons.ball} name="3D object" fly />
          <Tool icon={icons.cylinder} name="Extrude" fly />
          <Tool icon={icons.dots} name="Array" fly />
          <HSep />
          <Tool icon={icons.move} name="Dimension" fly />
          <HSep />
          <Tool icon={icons.slab} name="Wall" fly />
          <Tool icon={icons.cog} name="Options" fly />
        </aside>

        <main className="ml-px flex min-w-0 flex-1 flex-col border-l border-[#858585]">
          <div className="flex h-4 shrink-0 border-t border-[#858585]">
            <svg width="13" height="15" viewBox="0 0 13 15" fill="none" aria-hidden="true" className="ml-px shrink-0 bg-[#bcbcac]">
              <path d="M5 13V3M2 5.500L5 2.500l3 3M10 10l2 3" stroke="#000" strokeWidth="1.200" />
            </svg>
            <TopRuler />
          </div>
          <div className="flex min-h-0 flex-1">
            <SideRuler />
            <div className="flex min-w-0 flex-1 flex-col">
              <div className="flex min-h-0 flex-1">
                <div className="relative min-w-0 flex-1 overflow-hidden border-t border-r border-b border-t-[#555] border-r-[#ddd] border-b-[#ddd] bg-white">
                  <svg width="11" height="11" viewBox="0 0 11 11" className="absolute top-[249px] left-[314px]" aria-hidden="true">
                    <path d="M.5.5l10 10M10.500.5l-10 10" stroke="#f0f" strokeWidth="2" />
                  </svg>
                  <span className="absolute top-[234px] left-[623px] size-px bg-black" />
                </div>
                <div className="flex w-[17px] shrink-0 flex-col bg-[#717171]">
                  <ScrollButton name="Scroll up" d="M0 5h6L3 2z" className="h-4 w-full" />
                  <div className="flex min-h-0 flex-1 flex-col">
                    <span className="grow-[182]" />
                    <span className="h-[73px] border border-[#464646] bg-[#5d5d5d]" />
                    <span className="grow-[182]" />
                  </div>
                  <ScrollButton name="Scroll down" d="M0 2h6L3 5z" className="h-4 w-full" />
                </div>
              </div>
              <div className="flex h-[18px] shrink-0 border-t border-white bg-[#5d5d5d]">
                <button type="button" className="ml-[5px] flex w-[65px] items-center gap-1 border-r-2 border-b-2 border-black pl-[5px]">
                  <svg width="12" height="12" viewBox="0 0 12 12" fill="none" aria-hidden="true" className="shrink-0">
                    <path d="M.5 2.500l2-2h6v5l-2 2h-6zM.5 2.500h6v5" fill="#eee" stroke="#000" />
                    <path d="M4 6l5 5H4z" fill="#fff" stroke="#000" />
                    <circle cx="8.500" cy="7.500" r="3" fill="#ccc" stroke="#000" />
                  </svg>
                  Model
                </button>
                <button type="button" className="flex w-[71px] items-center gap-1 border-r border-b border-[#4a4a4a] pl-[7px] text-[10px] text-[#a5a5a5]">
                  <svg width="10" height="12" viewBox="0 0 10 12" fill="none" aria-hidden="true" className="mr-px shrink-0">
                    <path d="M.5.5h6l3 3v8h-9z" fill="#fff" stroke="#111" />
                    <path d="M4 5.500h1.500V10M4 10h3" stroke="#00008b" />
                  </svg>
                  Paper 1
                </button>
                <span className="ml-[23px] w-[3px] bg-white" />
                <ScrollButton name="Scroll left" d="M4 0v6L1 3z" className="ml-px h-full w-[17px]" />
                <div className="flex flex-1 bg-[#717171]">
                  <span className="grow-[437]" />
                  <span className="w-[175px] border border-[#464646] bg-[#5d5d5d]" />
                  <span className="grow-[437]" />
                </div>
                <ScrollButton name="Scroll right" d="M2 0v6l3-3z" className="h-full w-[17px]" />
                <span className="w-[17px]" />
              </div>
            </div>
          </div>
        </main>

        <aside className="flex w-[23px] shrink-0 flex-col items-end overflow-hidden border-t border-[#858585] bg-[#5d5d5d] pt-px">
          {sideTabs.map((t) => (
            <button
              key={t.name}
              type="button"
              className={`flex w-[21px] shrink-0 flex-col items-center gap-1 overflow-hidden rounded-l border border-[#484848] pt-1 font-['Liberation_Sans',sans-serif] text-[12px] leading-5 ${t.h} ${t.on ? "bg-[#8aaee0] text-black" : "bg-[#555] text-white"}`}
            >
              <svg width="15" height="15" viewBox="0 0 15 15" fill="none" aria-hidden="true" className="shrink-0">{t.glyph}</svg>
              <span className="whitespace-nowrap [writing-mode:vertical-rl]">{t.name}</span>
            </button>
          ))}
        </aside>

        <aside className="flex w-[30px] shrink-0 flex-col items-center overflow-hidden border-t border-l border-[#858585] bg-[#5d5d5d] pr-[2px]">
          <HGrip />
          <Tool icon={icons.magnet} name="Magnet" fly />
          <HSep />
          <Tool icon={icons.parallel} name="Parallel" fly />
          <Tool icon={icons.stretch} name="Stretch" fly />
          <HSep />
          <Tool icon={icons.chain} name="Copy entities" fly />
          <Tool icon={icons.house} name="Assemble" fly />
          <span className="flex h-[9px] w-[22px] items-end justify-end">
            <svg width="4" height="4" viewBox="0 0 4 4" aria-hidden="true"><path d="M4 0v4H0z" fill="#fff" /></svg>
          </span>
          <HSep />
          <Tool icon={icons.stack} name="Arrange" fly />
          <div className="h-6 shrink-0">
            <Tool icon={icons.bits} name="Explode" />
          </div>
          <Tool icon={icons.panel} name="Viewport" fly />
          <Tool icon={icons.union} name="Union" fly />
          <Tool icon={icons.boolean} name="Subtract" fly />
          <Tool icon={icons.paint} name="Paint" fly />
          <Tool icon={icons.drum} name="Hole" fly />
          <Tool icon={icons.shell} name="Shell" fly />
          <Tool icon={icons.bend} name="Bend" fly />
          <Tool icon={icons.globe} name="Deform" fly />
          <Tool icon={icons.screw} name="Thread" fly />
          <Tool icon={icons.plus} name="Add" />
          <span className="flex h-[9px] w-[26px] items-start justify-end gap-[5px]">
            <span className="h-[5px] w-2 bg-red-600" />
            <svg width="4" height="9" viewBox="0 0 4 9" aria-hidden="true"><path d="M4 0v4H0zM4 5v4H0z" fill="#fff" /></svg>
          </span>
        </aside>
      </div>

      {/* inspector bar */}
      <section className="flex h-[41px] shrink-0 items-center border-t border-b border-t-[#858585] border-b-[#454545] bg-[#5d5d5d]">
        <span className="flex w-[10px] justify-center pl-1">
          <span className="h-[30px] w-[2px] bg-[repeating-linear-gradient(to_bottom,#8c8c8c_0_2px,transparent_2px_4px)]" />
        </span>
        <button type="button" aria-label="Edit tool">
          <svg width="22" height="22" viewBox="0 0 22 22" fill="none">
            <path d="M5 5c-2 6 1 11 6 11l7-1" stroke="#000" strokeWidth="3" />
            <path d="M5 5c-2 6 1 11 6 11l7-1" stroke="#f00" strokeWidth="1.300" />
            <path d="M4 7h2v2H4zM10 15h3v3h-3zM17 14h2v2h-2z" fill="#f00" />
            <path d="M9 4l9 9" stroke="#000" strokeWidth="3.500" />
            <path d="M9 4l9 9" stroke="#fd0" strokeWidth="1.800" />
            <path d="M16 4l-6 6" stroke="#fff" strokeWidth="1.500" />
          </svg>
        </button>
        <button type="button" aria-label="Cancel" className="ml-[3px]">
          <svg width="14" height="14" viewBox="0 0 14 14"><path d="M2 2l10 10M12 2L2 12" stroke="#8f8f8f" strokeWidth="4" /></svg>
        </button>
        <button type="button" aria-label="Table" className="ml-2">
          <svg width="16" height="16" viewBox="0 0 16 16" fill="none">
            <path d="M.5 1.500h15v14H.5z" fill="#fff" stroke="#2f68c8" />
            <path d="M0 1h16v3H0z" fill="#4e8ef0" />
            <path d="M2 6.500h12M2 8.500h12M2 10.500h12M2 12.500h12M5.500 5v9M10 5v9" stroke="#88a" strokeWidth=".8" />
          </svg>
        </button>
        <span className="mr-1 ml-[5px] h-7 w-[2px] border-l border-r border-l-[#3a3a3a] border-r-[#747474]" />
        <div className="flex gap-1">
          <div className="flex w-[51px] flex-col">
            <label htmlFor="length" className="flex items-center gap-[2px] text-[12px] leading-[15px]"><Lock />Length</label>
            <input id="length" defaultValue="0 in" className="h-[21px] w-full border-2 border-[#858585] bg-[#383838] px-[2px]" />
          </div>
          <div className="flex w-[51px] flex-col">
            <label htmlFor="angle" className="flex items-center gap-[2px] text-[12px] leading-[15px]"><Lock />Angle</label>
            <span className="flex h-[21px] border-2 border-[#858585] bg-[#383838]">
              <input id="angle" defaultValue="0" className="w-0 flex-1 bg-transparent px-[2px]" />
              <span className="flex w-[15px] flex-col bg-[#5d5d5d]">
                <button type="button" aria-label="Increase" className="flex flex-1 items-center justify-center border-b border-[#454545]">
                  <svg width="4" height="2" viewBox="0 0 4 2"><path d="M0 2l2-2 2 2z" fill="#fff" /></svg>
                </button>
                <button type="button" aria-label="Decrease" className="flex flex-1 items-center justify-center">
                  <svg width="4" height="2" viewBox="0 0 4 2"><path d="M0 0h4L2 2z" fill="#fff" /></svg>
                </button>
              </span>
            </span>
          </div>
        </div>
      </section>

      {/* status bar */}
      <footer className="flex h-[26px] shrink-0 items-center bg-linear-to-b from-[#595959] to-[#444]">
        <p className="mb-[2px] ml-[9px] flex-1">Define the start point of the line</p>
        <button type="button" className="h-[22px] border-r border-[#ddd] pt-px pr-[2px]">SNAP</button>
        <button type="button" className="mr-[17px] h-[22px] border-r border-[#ddd] pt-px pr-[2px] pl-1">GEO</button>
        <div className="mt-[2px] flex gap-[13px]">
          <Coord axis="X" value="-520.659465" />
          <Coord axis="Y" value="558.39667 in" />
          <Coord axis="Z" value="0 in" off />
        </div>
        <span className="ml-[6px] flex h-[22px] w-[56px] border-l border-[#ddd] pt-px pl-1">&lt;1%</span>
        <span className="flex h-[22px] w-[61px] border-l border-[#ddd] pt-px pl-[3px]">5:19 PM</span>
      </footer>
    </div>
  );
}
